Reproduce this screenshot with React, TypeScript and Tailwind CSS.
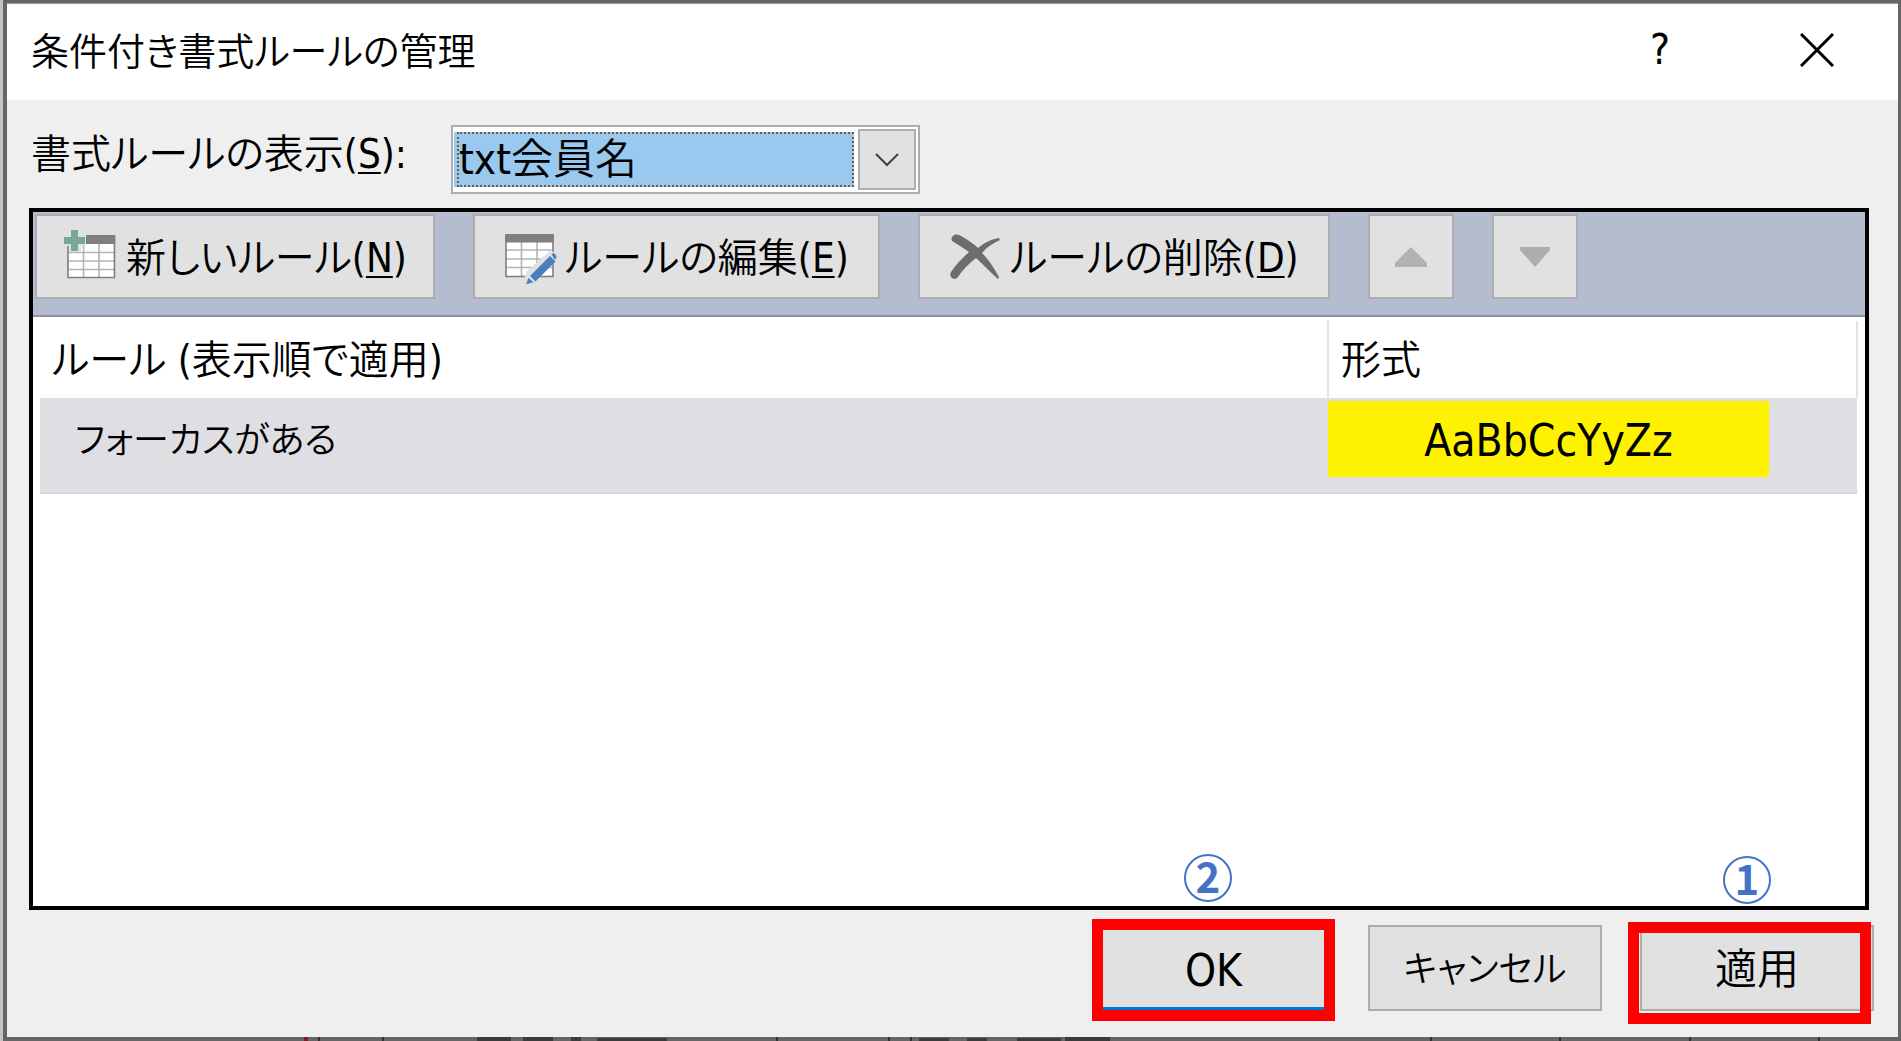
import type { ReactNode } from "react";

const face =
  "font-['DejaVu_Sans_Condensed','Noto_Sans_CJK_JP',sans-serif] [font-feature-settings:'palt'] font-[350]";

function Key({ children }: { children: ReactNode }) {
  return (
    <span className="underline decoration-2 underline-offset-4">{children}</span>
  );
}

function NewRuleIcon() {
  return (
    <svg width="52" height="54" viewBox="0 0 52 54" aria-hidden="true">
      <rect x="4" y="14" width="47" height="34" fill="#fff" />
      <path d="M19.5 14v34M35 14v34M4 22.5h47M4 31h47M4 39.5h47" stroke="#b4b4b4" strokeWidth="1.6" fill="none" />
      <path d="M4 16v31.5h46.5V14" stroke="#7f7f7f" strokeWidth="1.6" fill="none" />
      <rect x="22" y="5" width="29.4" height="9" fill="#7f7f7f" />
      <path d="M5 0h12v22H5zM0 5h21.500v11H0z" fill="#e1e1e1" />
      <path d="M7 0h7v7h7v7h-7v7H7v-7H0V7h7z" fill="#76a797" />
    </svg>
  );
}

function EditRuleIcon() {
  return (
    <svg width="52" height="50" viewBox="0 -2 52 50" className="overflow-visible" aria-hidden="true">
      <rect x="1" y="1" width="47" height="41" fill="#fff" />
      <path d="M16.500 8v34M32 8v34M1 16h47M1 25h47M1 33.500h47" stroke="#b4b4b4" strokeWidth="1.6" fill="none" />
      <rect x="1" y="1" width="47" height="41.500" stroke="#7f7f7f" strokeWidth="1.600" fill="none" />
      <rect x="0.200" y="0" width="48.600" height="8.500" fill="#7f7f7f" />
      <path d="M17 51l5-14 24-21 8 8-24 23z" fill="#e1e1e1" />
      <path d="M25 42l20-20 5.500 5.500-20 20z" fill="#4a7fbe" />
      <path d="M46.500 20.500l2-1.500q3 1.500 3 4l-1.500 3z" fill="#4a7fbe" />
      <path d="M23.500 44l5 4.200-7.500 2z" fill="#4a7fbe" />
    </svg>
  );
}

function DeleteRuleIcon() {
  return (
    <svg width="50" height="48" viewBox="0 0 50 48" aria-hidden="true">
      <path
        d="M2 8C0 4 5 0 9 2C17 6 24 11 28 15C35 9 42 6 49 5L50 7C43 10 37 14 32 20C39 27 44 35 49 44L48 46C41 40 34 32 26 25C18 31 12 38 8 44C5 48 -2 45 1 39C6 31 13 25 19 19C14 15 8 12 2 8Z"
        fill="#6d6d6d"
      />
    </svg>
  );
}

function ToolButton({ icon, children, width }: { icon: ReactNode; children: ReactNode; width: string }) {
  return (
    <button
      type="button"
      className={`flex h-[85px] items-center whitespace-nowrap border-2 border-[#adadad] bg-[#e1e1e1] ${width}`}
    >
      {icon}
      <span className="pt-0.5 leading-[60px]">{children}</span>
    </button>
  );
}

function StepMark({ n, className }: { n: number; className: string }) {
  return (
    <span
      className={`absolute flex size-12 items-center justify-center rounded-full border-2 border-[#4472c4] pb-1.5 font-['Noto_Sans_CJK_JP',sans-serif] text-[42px] leading-none font-bold text-[#4472c4] ${className}`}
    >
      {n}
    </span>
  );
}

export default function App() {
  return (
    <div className={`flex min-h-screen flex-col border-l-[3px] border-[#c4c4c4] bg-[#666666] pt-[3px] pr-[3px] pl-1 text-[40px] text-black ${face}`}>
      <main className="flex flex-1 flex-col border-t border-[#9a9a9a] bg-[#efefef]">
        <header className="flex h-24 items-center bg-white pr-[64px] pb-1 pl-6">
          <h1 className="flex-1 pt-1 text-[38px] leading-[60px]">条件付き書式ルールの管理</h1>
          <button type="button" aria-label="ヘルプ" className="mr-[130px] w-5 text-center text-[42px] leading-[60px] font-normal">
            ?
          </button>
          <button type="button" aria-label="閉じる">
            <svg width="34" height="34" viewBox="0 0 34 34" aria-hidden="true">
              <path d="M1 1l32 32M33 1L1 33" stroke="#000" strokeWidth="3" />
            </svg>
          </button>
        </header>

        <div className="flex h-[108px] items-start pt-[25px] pl-6">
          <label htmlFor="target" className="w-[420px] leading-[58px]">
            書式ルールの表示(<Key>S</Key>):
          </label>
          <div className="flex h-[69px] w-[469px] items-center border-2 border-[#abadb3] bg-white pr-0.5">
            <div className="ml-px flex-1 bg-[#99c9ef] pl-[3px]">
              <select
                id="target"
                className="block h-[55px] w-full appearance-none border-2 border-dotted border-[#7a5a3c] bg-[#99c9ef] text-[42px] leading-[50px] outline-none"
              >
                <option>txt会員名</option>
              </select>
            </div>
            <span className="pointer-events-none ml-1 flex h-[61px] w-[58px] items-center justify-center border-2 border-[#adadad] bg-[#e1e1e1]">
              <svg width="24" height="14" viewBox="0 0 24 14" aria-hidden="true">
                <path d="M1 1l11 11L23 1" fill="none" stroke="#404040" strokeWidth="2" />
              </svg>
            </span>
          </div>
        </div>

        <section className="mr-[29px] ml-[22px] flex flex-1 flex-col border-4 border-black bg-white">
          <div className="flex h-[105px] items-start gap-[38px] border-b-2 border-[#8b91a3] bg-[#b6bccf] pt-0.5 pl-0.5">
            <ToolButton width="w-[400px] gap-2.5 pl-[27px]" icon={<NewRuleIcon />}>
              新しいルール(<Key>N</Key>)
            </ToolButton>
            <ToolButton width="w-[407px] gap-2 pl-[30px]" icon={<EditRuleIcon />}>
              ルールの編集(<Key>E</Key>)
            </ToolButton>
            <ToolButton width="w-[412px] gap-2.5 pl-[30px]" icon={<DeleteRuleIcon />}>
              ルールの削除(<Key>D</Key>)
            </ToolButton>
            <button type="button" aria-label="上へ移動" className="flex h-[85px] w-[86px] items-center justify-center border-2 border-[#adadad] bg-[#e1e1e1]">
              <svg width="32" height="20" viewBox="0 0 32 20" aria-hidden="true">
                <path d="M16 0l16 16v4H0v-4z" fill="#b3b1b4" />
              </svg>
            </button>
            <button type="button" aria-label="下へ移動" className="flex h-[85px] w-[86px] items-center justify-center border-2 border-[#adadad] bg-[#e1e1e1]">
              <svg width="30" height="20" viewBox="0 0 30 20" aria-hidden="true">
                <path d="M0 0h30v3L15 20 0 3z" fill="#aeacaf" />
              </svg>
            </button>
          </div>

          <div className="px-[7px] pt-1">
            <table className="w-full table-fixed border-collapse text-left">
              <thead>
                <tr className="h-[77px]">
                  <th scope="col" className="border-r-2 border-[#e3e3e3] p-0 pl-3 font-[350]">
                    ルール (表示順で適用)
                  </th>
                  <th scope="col" className="w-[529px] border-r-2 border-[#e3e3e3] p-0 pl-3 font-[350]">
                    形式
                  </th>
                </tr>
              </thead>
              <tbody>
                <tr className="h-[95px] border-b-2 border-[#d9d5d2] bg-[#dfdee3]">
                  <td className="p-0 pb-2 pl-[35px] text-[36px] leading-[60px]">フォーカスがある</td>
                  <td className="p-0 pb-3">
                    <div className="h-[76px] w-[441px] bg-[#fff200] text-center text-[44px] leading-[80px] font-normal">
                      AaBbCcYyZz
                    </div>
                  </td>
                </tr>
              </tbody>
            </table>
          </div>
        </section>

        <footer className="flex h-[127px] items-start justify-end pr-[24px]">
          <div className="relative mt-[9px] mr-[33px] border-[11px] border-[#ff0000]">
            <StepMark n={2} className="-top-[76px] left-[81px]" />
            <button type="button" className="block h-20 w-[221px] border-b-[3px] border-[#0078d7] bg-[#e1e1e1] pt-1 text-[44px] leading-[72px] font-normal">
              OK
            </button>
          </div>
          <button type="button" className="mt-[15px] mr-[38px] h-[86px] w-[234px] border-2 border-[#adadad] bg-[#e1e1e1] pt-1 text-[36px]">
            キャンセル
          </button>
          <div className="relative mt-[15px]">
            <button type="button" className="block h-[86px] w-[234px] border-2 border-[#adadad] bg-[#e1e1e1] pt-0.5 text-[42px]">
              適用
            </button>
            <span className="pointer-events-none absolute -top-[3px] -left-3 h-[102px] w-[243px] border-[11px] border-[#ff0000]" />
            <StepMark n={1} className="-top-[69px] left-[83px]" />
          </div>
        </footer>
      </main>
      <svg className="block h-1 w-full" viewBox="0 0 1891 4" preserveAspectRatio="none" aria-hidden="true">
        <path d="M470 0h34v4h-34zM516 0h30v4h-30zM564 0h10v4h-10zM590 1h70v3h-70zM912 1h30v3h-30zM960 1h20v3h-20zM1010 1h44v3h-44zM1058 0h45v4h-45z" fill="#3c3a3c" />
        <path d="M770 0v4M882 0v4M904 0v4M1424 0v4M1553 0v4M1683 0v4M1812 0v4M312 0v4M376 0v4" stroke="#333" strokeWidth="2" />
        <path d="M299 0v4" stroke="#7a2020" strokeWidth="4" />
      </svg>
    </div>
  );
}
